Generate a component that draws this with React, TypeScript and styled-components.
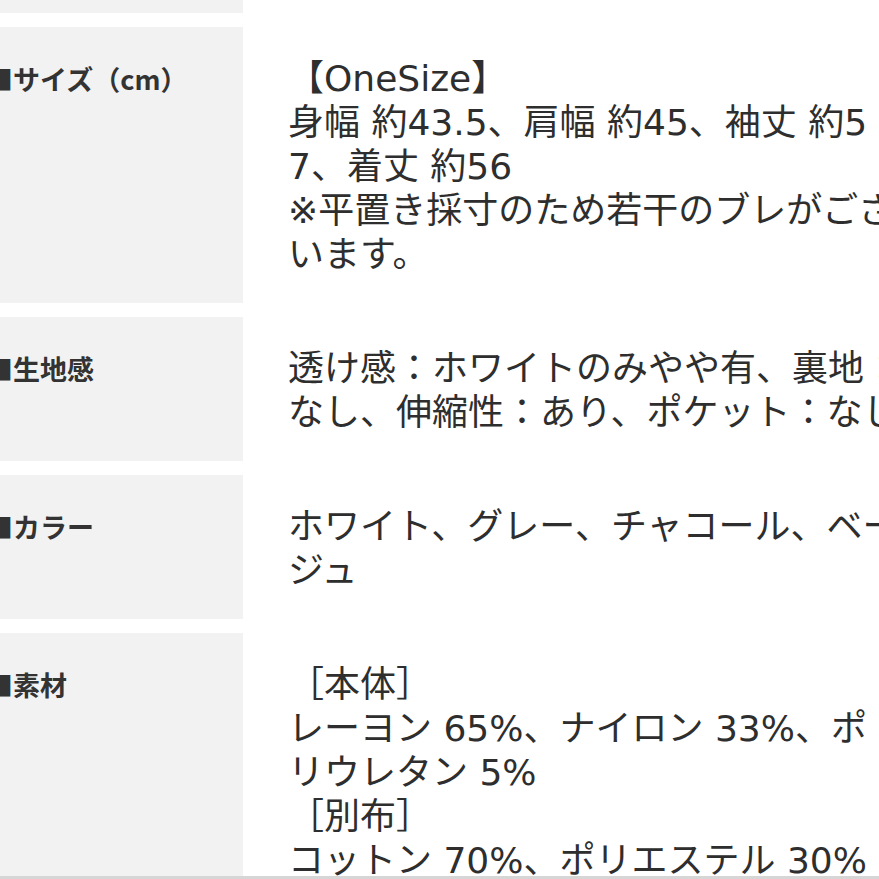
import styled, { createGlobalStyle } from "styled-components";

const GlobalStyle = createGlobalStyle`
  html, body {
    margin: 0;
    padding: 0;
    background: #ffffff;
    overflow: hidden;
  }
  body {
    font-family: "Noto Sans CJK JP", "Noto Sans", sans-serif;
    color: #333333;
  }
`;

const Screen = styled.div`
  height: 879px;
  display: flex;
  flex-direction: column;
  overflow: hidden;
`;

const Table = styled.div`
  flex: 1;
  min-height: 0;
  overflow: hidden;
  display: flex;
  flex-direction: column;
  gap: 14px;
  margin-left: -14px;
  width: 1000px;
`;

const Row = styled.div<{ $stub?: boolean }>`
  display: grid;
  grid-template-columns: 257px 1fr;
  flex-shrink: 0;
  height: ${props => (props.$stub ? "13px" : "auto")};
`;

const Label = styled.div<{ $empty?: boolean }>`
  background: #f2f2f2;
  padding: ${props => (props.$empty ? "0" : "30px 0 26px")};
  font-size: 27px;
  font-weight: 700;
  line-height: 44px;
  color: #333333;
  white-space: nowrap;
`;

const Value = styled.div`
  padding: 30px 0 26px 45px;
  width: 614px;
  font-family: "DejaVu Sans", "Noto Sans CJK JP", sans-serif;
  font-size: 36px;
  line-height: 44px;
  color: #2e2e2e;
  word-break: break-all;
`;

const BottomEdge = styled.div`
  height: 3px;
  flex-shrink: 0;
  background: #d6d6d6;
`;

interface Spec {
  label: string;
  lines: string[];
}

const specs: Spec[] = [
  {
    label: "■サイズ（cm）",
    lines: [
      "【OneSize】",
      "身幅 約43.5、肩幅 約45、袖丈 約57、着丈 約56",
      "※平置き採寸のため若干のブレがございます。",
    ],
  },
  {
    label: "■生地感",
    lines: ["透け感：ホワイトのみやや有、裏地：なし、伸縮性：あり、ポケット：なし"],
  },
  {
    label: "■カラー",
    lines: ["ホワイト、グレー、チャコール、ベージュ"],
  },
  {
    label: "■素材",
    lines: [
      "［本体］",
      "レーヨン 65%、ナイロン 33%、ポリウレタン 5%",
      "［別布］",
      "コットン 70%、ポリエステル 30%",
    ],
  },
];

export default function App() {
  return (
    <Screen>
      <GlobalStyle />
      <Table>
        <Row $stub>
          <Label $empty />
          <div />
        </Row>
        {specs.map(spec => (
          <Row key={spec.label}>
            <Label>{spec.label}</Label>
            <Value>
              {spec.lines.map((line, i) => (
                <div key={i}>{line}</div>
              ))}
            </Value>
          </Row>
        ))}
      </Table>
      <BottomEdge />
    </Screen>
  );
}
